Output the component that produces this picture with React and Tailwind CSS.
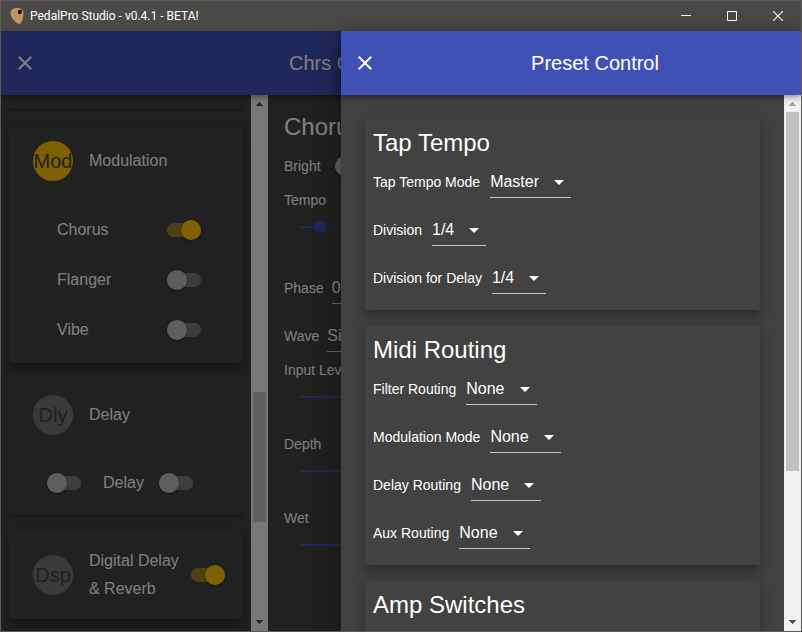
import { useState } from "react";
import clsx from "clsx";

function CloseIcon() {
  return (
    <svg viewBox="0 0 24 24" className="size-6 fill-current" aria-hidden="true">
      <path d="M19 6.41L17.59 5 12 10.59 6.41 5 5 6.41 10.59 12 5 17.59 6.41 19 12 13.41 17.59 19 19 17.59 13.41 12z" />
    </svg>
  );
}

function TitleBar() {
  const button = "flex h-[30px] w-[46px] items-center justify-center";
  return (
    <div className="flex h-[30px] shrink-0 items-center bg-[#4c4a48] text-white">
      <svg viewBox="0 0 16 18" className="ml-2 h-[18px] w-4" aria-hidden="true">
        <path d="M1.500 5C2 2.500 4.500 1 8 1c4 0 6.500 1.500 6.500 5 0 4-1 7.500-2.500 10-.800 1.300-2.500 1.200-4 0C4.500 13.500 1 9.500 1.500 5z" fill="#bd9668" />
        <path d="M9 3.500l3.500-1V6l-1 1H9.500L9 6z" fill="#0c0a08" />
      </svg>
      <span className="ml-[5px] flex-1 font-[Roboto,'Noto_Sans',sans-serif] text-[12px] leading-4">
        PedalPro Studio - v0.4.1 - BETA!
      </span>
      <button type="button" aria-label="Minimize" className={button}>
        <svg viewBox="0 0 10 10" className="size-[10px]" aria-hidden="true">
          <path d="M0 4h10v1H0z" fill="#fff" />
        </svg>
      </button>
      <button type="button" aria-label="Maximize" className={button}>
        <svg viewBox="0 0 10 10" className="size-[10px]" aria-hidden="true">
          <path d="M.5.5h9v9h-9z" fill="none" stroke="#fff" />
        </svg>
      </button>
      <button type="button" aria-label="Close" className={button}>
        <svg viewBox="0 0 10 10" className="size-[10px]" aria-hidden="true">
          <path d="M0 0l10 10M10 0L0 10" fill="none" stroke="#fff" strokeWidth="1.1" />
        </svg>
      </button>
    </div>
  );
}

function AppBar({ label, children }) {
  return (
    <header className="relative z-10 flex h-16 shrink-0 items-center bg-[#3f51b5] shadow-[0_2px_4px_-1px_rgba(0,0,0,0.2),0_4px_5px_0_rgba(0,0,0,0.14),0_1px_10px_0_rgba(0,0,0,0.12)]">
      <button type="button" aria-label={label} className="flex size-12 items-center justify-center">
        <CloseIcon />
      </button>
      {children}
    </header>
  );
}

function ScrollArrow({ up, disabled }) {
  return (
    <svg
      viewBox="0 0 17 17"
      shapeRendering="crispEdges"
      className={clsx("size-[17px] shrink-0", disabled ? "fill-[#a3a3a3]" : "fill-[#505050]")}
      aria-hidden="true"
    >
      {up ? (
        <path d="M8 7h1v1h1v1h1v1h1v1H5v-1h1V9h1V8h1z" />
      ) : (
        <path d="M5 6h7v1h-1v1h-1v1H9v1H8V9H7V8H6V7H5z" />
      )}
    </svg>
  );
}

function ScrollBar({ before, thumb, after }) {
  return (
    <div className="flex w-[17px] shrink-0 flex-col bg-[#f1f1f1]">
      <ScrollArrow up disabled={before === 0} />
      <div style={{ flexGrow: before }} />
      <div className="mx-[2px] bg-[#c1c1c1]" style={{ flexGrow: thumb }} />
      <div style={{ flexGrow: after }} />
      <ScrollArrow />
    </div>
  );
}

function Switch({ label, id, on = false }) {
  const [checked, setChecked] = useState(on);
  return (
    <input
      id={id}
      type="checkbox"
      role="switch"
      aria-label={label}
      checked={checked}
      onChange={(e) => setChecked(e.target.checked)}
      className="block h-[14px] w-[34px] shrink-0 appearance-none rounded-full bg-white/30 before:block before:size-5 before:-translate-y-[3px] before:rounded-full before:bg-[#bdbdbd] before:shadow-[0_1px_3px_rgba(0,0,0,0.3)] before:content-[''] checked:bg-[#ffc107]/50 checked:before:translate-x-[14px] checked:before:bg-[#ffc107]"
    />
  );
}

function Avatar({ on, children }) {
  return (
    <div
      className={clsx(
        "flex size-10 shrink-0 items-center justify-center rounded-full text-xl text-[#424242]",
        on ? "bg-[#ffc107]" : "bg-[#757575]"
      )}
    >
      {children}
    </div>
  );
}

function PedalCard({ raised, className, children }) {
  return (
    <section
      className={clsx(
        "bg-[#424242]",
        raised
          ? "shadow-[0_5px_5px_-3px_rgba(0,0,0,0.2),0_8px_10px_1px_rgba(0,0,0,0.14),0_3px_14px_2px_rgba(0,0,0,0.12)]"
          : "shadow-[0_1px_3px_0_rgba(0,0,0,0.2),0_1px_1px_0_rgba(0,0,0,0.14),0_2px_1px_-1px_rgba(0,0,0,0.12)]",
        className
      )}
    >
      {children}
    </section>
  );
}

function SelectRow({ id, label, options, gap = "gap-2" }) {
  return (
    <div className={clsx("flex h-12 items-center", gap)}>
      <label htmlFor={id} className="text-sm whitespace-nowrap">
        {label}
      </label>
      <div className="relative">
        <select
          id={id}
          className="block field-sizing-content h-8 appearance-none border-b border-white/70 bg-transparent pt-[6px] pr-8 pb-[6px] text-base leading-[19px]"
        >
          {options.map((o) => (
            <option key={o}>{o}</option>
          ))}
        </select>
        <svg viewBox="0 0 24 24" className="pointer-events-none absolute top-1 right-0 size-6 fill-current" aria-hidden="true">
          <path d="M7 10l5 5 5-5z" />
        </svg>
      </div>
    </div>
  );
}

function SliderRow({ id, label, initial }) {
  const [value, setValue] = useState(initial);
  return (
    <div className="h-[74px]">
      <label htmlFor={id} className="block text-sm">
        {label}
      </label>
      <div className="flex h-[34px] items-center px-4">
        <input
          id={id}
          type="range"
          value={value}
          onChange={(e) => setValue(Number(e.target.value))}
          style={{
            background: `linear-gradient(to right, #3f51b5 ${value + 1}%, rgba(63,81,181,0.24) ${value + 1}%)`,
          }}
          className="block h-[2px] w-full appearance-none [&::-webkit-slider-thumb]:size-3 [&::-webkit-slider-thumb]:appearance-none [&::-webkit-slider-thumb]:rounded-full [&::-webkit-slider-thumb]:bg-[#3f51b5]"
        />
      </div>
    </div>
  );
}

function PedalList() {
  return (
    <aside className="flex w-[267px] shrink-0">
      <div className="flex flex-1 flex-col gap-4 overflow-hidden px-2 text-base leading-7">
        <PedalCard className="h-[14px] shrink-0 rounded-b" />
        <PedalCard raised className="rounded pb-2">
          <div className="flex items-center gap-4 px-6 py-4">
            <Avatar on>Mod</Avatar>
            <h2>Modulation</h2>
          </div>
          <ul className="pt-2 pr-[42px] pl-12">
            {["Chorus", "Flanger", "Vibe"].map((name) => (
              <li key={name} className="flex h-[50px] items-center justify-between">
                <label htmlFor={name}>{name}</label>
                <Switch id={name} on={name === "Chorus"} />
              </li>
            ))}
          </ul>
        </PedalCard>
        <PedalCard className="rounded pb-2">
          <div className="flex items-center gap-4 px-6 py-4">
            <Avatar>Dly</Avatar>
            <h2>Delay</h2>
          </div>
          <div className="flex h-14 items-center pt-2 pl-[38px]">
            <Switch label="Delay on" />
            <label htmlFor="delay" className="mr-[15px] ml-[22px]">
              Delay
            </label>
            <Switch id="delay" />
          </div>
        </PedalCard>
        <PedalCard raised className="flex items-center rounded py-4 pr-[18px] pl-6">
          <Avatar>Dsp</Avatar>
          <label htmlFor="dsp" className="ml-4 flex-1">
            Digital Delay &amp; Reverb
          </label>
          <Switch id="dsp" on />
        </PedalCard>
      </div>
      <ScrollBar before={280} thumb={130} after={92} />
    </aside>
  );
}

function PedalEditor() {
  return (
    <main className="min-w-0 flex-1 overflow-hidden p-4">
      <h1 className="text-2xl leading-[31px]">Chorus</h1>
      <div className="flex h-12 items-center gap-[14px]">
        <label htmlFor="bright" className="text-sm">
          Bright
        </label>
        <Switch id="bright" />
      </div>
      <SliderRow id="tempo" label="Tempo" initial={3} />
      <SelectRow id="phase" label="Phase" options={["0"]} />
      <SelectRow id="wave" label="Wave" options={["Sine"]} />
      <SliderRow id="input" label="Input Level" initial={80} />
      <SliderRow id="depth" label="Depth" initial={80} />
      <SliderRow id="wet" label="Wet" initial={80} />
    </main>
  );
}

const presetSections = [
  {
    title: "Tap Tempo",
    rows: [
      { label: "Tap Tempo Mode", value: "Master" },
      { label: "Division", value: "1/4" },
      { label: "Division for Delay", value: "1/4" },
    ],
  },
  {
    title: "Midi Routing",
    rows: [
      { label: "Filter Routing", value: "None" },
      { label: "Modulation Mode", value: "None" },
      { label: "Delay Routing", value: "None" },
      { label: "Aux Routing", value: "None" },
    ],
  },
  { title: "Amp Switches", rows: [] },
];

function PresetDrawer() {
  return (
    <div
      role="dialog"
      aria-label="Preset Control"
      className="flex w-[460px] max-w-full flex-col bg-[#424242] shadow-[0_8px_10px_-5px_rgba(0,0,0,0.2),0_16px_24px_2px_rgba(0,0,0,0.14),0_6px_30px_5px_rgba(0,0,0,0.12)]"
    >
      <AppBar label="Close preset control">
        <h2 className="flex-1 text-center text-xl">Preset Control</h2>
      </AppBar>
      <div className="flex min-h-0 flex-1">
        <div className="flex min-w-0 flex-1 flex-col gap-4 overflow-hidden px-6 pt-6">
          {presetSections.map(({ title, rows }) => (
            <PedalCard key={title} raised className={clsx("shrink-0 p-2", rows.length === 0 && "min-h-24")}>
              <h3 className="text-2xl leading-[31px]">{title}</h3>
              {rows.map(({ label, value }) => (
                <SelectRow
                  key={label}
                  id={label.replaceAll(" ", "-")}
                  label={label}
                  options={[value]}
                  gap="gap-[10px]"
                />
              ))}
            </PedalCard>
          ))}
        </div>
        <ScrollBar before={0} thumb={359} after={143} />
      </div>
    </div>
  );
}

export default function App() {
  return (
    <div className="flex h-screen flex-col overflow-hidden border border-[#5c5b59] bg-[#424242] font-['Liberation_Sans',Arial,sans-serif] text-white">
      <TitleBar />
      <div className="relative flex min-h-0 flex-1 flex-col">
        <AppBar label="Close">
          <h2 className="pl-60 text-xl">Chrs C</h2>
        </AppBar>
        <div className="flex min-h-0 flex-1">
          <PedalList />
          <PedalEditor />
        </div>
        <div className="absolute inset-0 z-20 flex justify-end bg-black/50">
          <PresetDrawer />
        </div>
      </div>
    </div>
  );
}
